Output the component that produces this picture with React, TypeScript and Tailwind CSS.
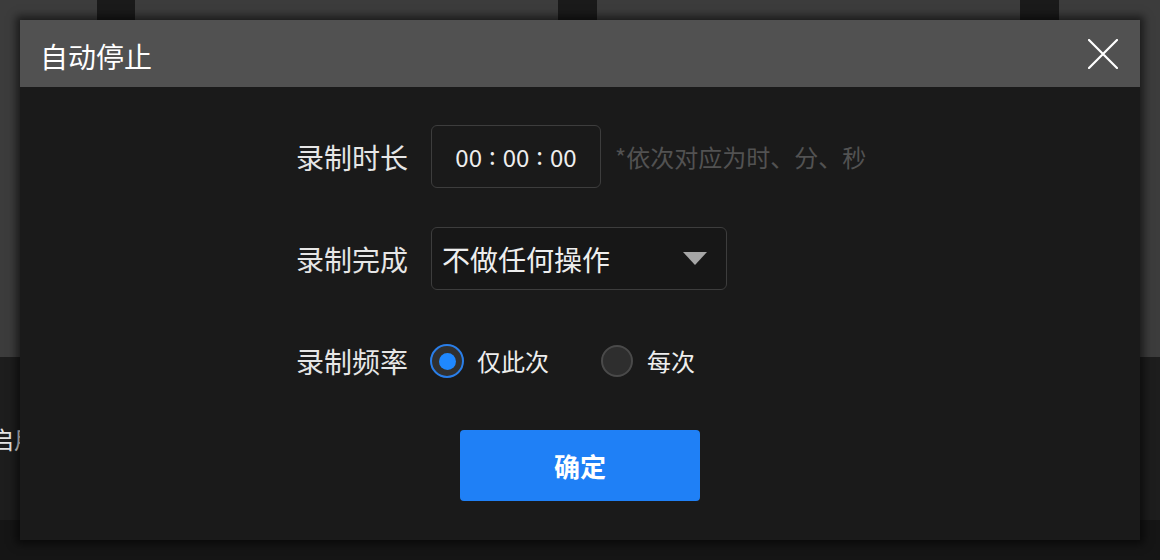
import React from "react";

export default function App() {
  const label = "w-[112px] shrink-0 whitespace-nowrap text-[28px] text-[#e6e6e6] leading-none";
  return (
    <div
      className="relative w-[1160px] h-[560px] overflow-hidden bg-[#1b1b1b]"
      style={{ fontFamily: '"Noto Sans CJK SC", "Noto Sans", sans-serif' }}
    >
      {/* background page */}
      <div className="flex flex-col h-full">
        <div className="flex h-[357px] bg-[#3c3c3c]">
          <div className="w-[97px]" />
          <div className="w-[38px] bg-[#1a1a1a]" />
          <div className="w-[423px]" />
          <div className="w-[39px] bg-[#1a1a1a]" />
          <div className="w-[423px]" />
          <div className="w-[39px] bg-[#1a1a1a]" />
          <div className="flex-1" />
        </div>
        <div className="flex-1 bg-[#1d1d1d] flex flex-col">
          <div className="h-[163px] flex items-center">
            <span className="ml-[-10px] text-[24px] text-[#e6e6e6] leading-none whitespace-nowrap">启用</span>
          </div>
          <div className="flex-1 bg-[#151515]" />
        </div>
      </div>

      {/* dialog */}
      <div className="absolute left-[20px] top-[20px] w-[1120px] h-[520px] flex flex-col bg-[#1a1a1a] shadow-[0_0_8px_4px_rgba(0,0,0,0.55)]">
        <div className="h-[67px] bg-[#515151] flex items-center justify-between pl-[20px] pr-[22px]">
          <span className="text-[28px] text-white leading-none mt-[4px] whitespace-nowrap">自动停止</span>
          <svg width="30" height="30" viewBox="0 0 30 30" className="mt-[1px]">
            <path d="M1 1 L29 29 M29 1 L1 29" stroke="#ffffff" strokeWidth="2.2" strokeLinecap="round" />
          </svg>
        </div>

        <div className="flex-1 flex flex-col pl-[276px] pt-[38px]">
          {/* row 1 */}
          <div className="flex items-center h-[63px]">
            <span className={label}>录制时长</span>
            <div className="ml-[23px] w-[170px] h-[63px] rounded-[6px] border border-[#3d3d3d] flex items-center justify-center text-[24px] text-[#eeeeee] leading-none whitespace-nowrap">
              <span>00</span>
              <span className="mx-[7px] mb-[3px]">:</span>
              <span>00</span>
              <span className="mx-[7px] mb-[3px]">:</span>
              <span>00</span>
            </div>
            <span className="ml-[14px] text-[24px] text-[#525252] leading-none whitespace-nowrap">*依次对应为时、分、秒</span>
          </div>

          {/* row 2 */}
          <div className="flex items-center h-[63px] mt-[39px]">
            <span className={label}>录制完成</span>
            <div className="ml-[23px] w-[296px] h-[63px] rounded-[6px] border border-[#3d3d3d] bg-[#171717] flex items-center justify-between pl-[10px] pr-[19px]">
              <span className="text-[28px] text-[#eeeeee] leading-none whitespace-nowrap">不做任何操作</span>
              <svg width="24" height="13" viewBox="0 0 24 13">
                <path d="M0 0 L24 0 L12 13 Z" fill="#a6a6a6" />
              </svg>
            </div>
          </div>

          {/* row 3 */}
          <div className="flex items-center h-[40px] mt-[51px]">
            <span className={label}>录制频率</span>
            <div className="ml-[22px] flex items-center">
              <div className="w-[34px] h-[34px] rounded-full border-2 border-[#2a7ee8] bg-[#303030] flex items-center justify-center">
                <div className="w-[17px] h-[17px] rounded-full bg-[#1f88ff]" />
              </div>
              <span className="ml-[13px] text-[24px] text-[#eeeeee] leading-none whitespace-nowrap">仅此次</span>
            </div>
            <div className="ml-[52px] flex items-center">
              <div className="w-[32px] h-[32px] rounded-full border-2 border-[#4a4a4a] bg-[#2e2e2e]" />
              <span className="ml-[14px] text-[24px] text-[#eeeeee] leading-none whitespace-nowrap">每次</span>
            </div>
          </div>

          {/* button */}
          <div className="mt-[49px] ml-[164px]">
            <button className="w-[240px] h-[71px] rounded-[4px] bg-[#1f80f6] text-white text-[26px] font-bold leading-none flex items-center justify-center">
              确定
            </button>
          </div>
        </div>
      </div>
    </div>
  );
}
